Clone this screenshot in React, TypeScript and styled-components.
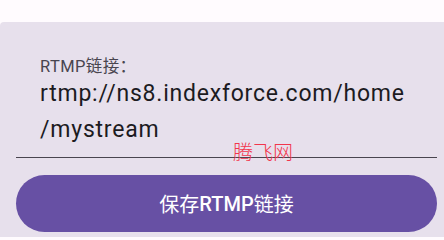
import * as React from 'react';
import styled, { createGlobalStyle } from 'styled-components';

const GlobalStyle = createGlobalStyle`
    html, body {
        margin: 0;
        padding: 0;
        background: #fffbfe;
        overflow: hidden;
    }
    body {
        font-family: Roboto, "Noto Sans CJK SC", sans-serif;
    }
`;

const App = () => {
    const url = 'rtmp://ns8.indexforce.com/home';
    const path = '/mystream';

    return (
        <>
            <GlobalStyle />
            <Page>
                <Card>
                    <Field>
                        <FieldLabel>RTMP链接：</FieldLabel>
                        <FieldValue>
                            {url}
                            <br />
                            {path}
                        </FieldValue>
                    </Field>
                    <SaveButton type="button">
                        保存<ButtonLatin>RTMP</ButtonLatin>链接
                    </SaveButton>
                    <Watermark>腾飞网</Watermark>
                </Card>
            </Page>
        </>
    );
};

export default App;

const Page = styled.div`
    width: 444px;
    height: 237px;
    padding-top: 22px;
    box-sizing: border-box;
`;

const Card = styled.div`
    position: relative;
    height: 215px;
    box-sizing: border-box;
    padding: 0 7px 0 16px;
    background: #e7e0ec;
    border-radius: 4px 0 0 0;
`;

const Field = styled.div`
    display: flex;
    flex-direction: column;
    padding: 35px 24px 9px 24px;
    border-bottom: 1px solid #49454f;
`;

const FieldLabel = styled.div`
    font-size: 16.5px;
    line-height: 19px;
    letter-spacing: 0.4px;
    color: #49454f;
`;

const FieldValue = styled.div`
    font-size: 23px;
    line-height: 36px;
    letter-spacing: 0.78px;
    color: #1c1b1f;
    white-space: nowrap;
`;

const SaveButton = styled.button`
    display: flex;
    align-items: center;
    justify-content: center;
    width: 100%;
    height: 57px;
    margin-top: 17px;
    border: none;
    border-radius: 29px;
    background: #6750a4;
    color: #ffffff;
    font-family: Roboto, "Noto Sans CJK SC", sans-serif;
    font-size: 20px;
    font-weight: 400;
    cursor: pointer;
`;

const ButtonLatin = styled.span`
    font-weight: 500;
`;

const Watermark = styled.div`
    position: absolute;
    left: 233px;
    top: 118px;
    font-family: "Noto Sans CJK SC", sans-serif;
    font-size: 20px;
    font-weight: 300;
    line-height: 24px;
    color: #f2364c;
    pointer-events: none;
`;
